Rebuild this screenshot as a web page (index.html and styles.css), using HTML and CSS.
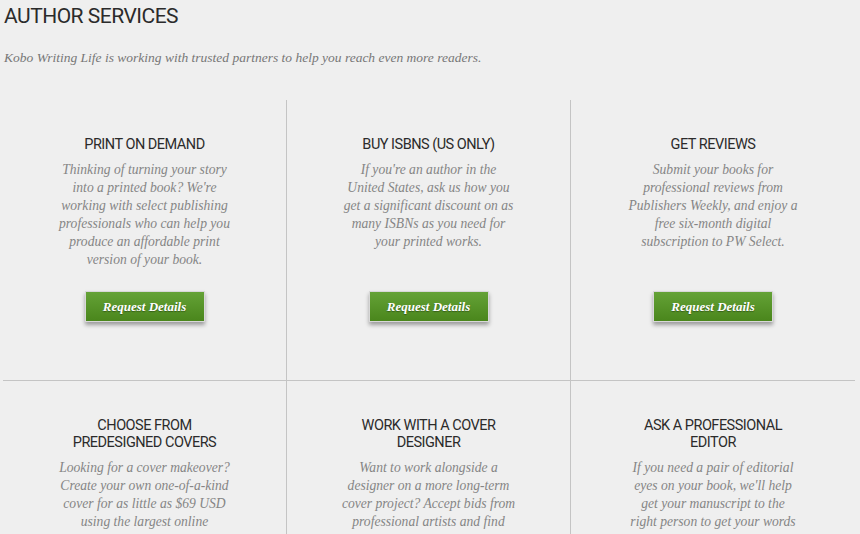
FILE: index.html
```html
<!DOCTYPE html>
<html lang="en">
<head>
    <meta charset="UTF-8">
    <meta name="viewport" content="width=device-width, initial-scale=1.0">
    <title>Author Services</title>
    <link rel="stylesheet" href="styles.css">
</head>
<body>

    <div class="page">
        <h1>AUTHOR SERVICES</h1>
        <p class="intro">Kobo Writing Life is working with trusted partners to help you reach even more readers.</p>

        <div class="services">
            <div class="service">
                <h2>PRINT ON DEMAND</h2>
                <p>Thinking of turning your story<br>into a printed book? We're<br>working with select publishing<br>professionals who can help you<br>produce an affordable print<br>version of your book.</p>
                <a class="btn" href="#">Request Details</a>
            </div>
            <div class="service">
                <h2>BUY ISBNS (US ONLY)</h2>
                <p>If you're an author in the<br>United States, ask us how you<br>get a significant discount on as<br>many ISBNs as you need for<br>your printed works.</p>
                <a class="btn" href="#">Request Details</a>
            </div>
            <div class="service">
                <h2>GET REVIEWS</h2>
                <p>Submit your books for<br>professional reviews from<br>Publishers Weekly, and enjoy a<br>free six-month digital<br>subscription to PW Select.</p>
                <a class="btn" href="#">Request Details</a>
            </div>
            <div class="service">
                <h2>CHOOSE FROM<br>PREDESIGNED COVERS</h2>
                <p>Looking for a cover makeover?<br>Create your own one-of-a-kind<br>cover for as little as $69 USD<br>using the largest online</p>
            </div>
            <div class="service">
                <h2>WORK WITH A COVER<br>DESIGNER</h2>
                <p>Want to work alongside a<br>designer on a more long-term<br>cover project? Accept bids from<br>professional artists and find</p>
            </div>
            <div class="service">
                <h2>ASK A PROFESSIONAL<br>EDITOR</h2>
                <p>If you need a pair of editorial<br>eyes on your book, we'll help<br>get your manuscript to the<br>right person to get your words</p>
            </div>
        </div>
    </div>

</body>
</html>
```

FILE: styles.css
```css
body {
    background-color: #efefef;
    margin: 0;
    font-family: "Liberation Serif", Georgia, serif;
    overflow: hidden;
}
.page {
    padding: 0 5px 0 3px;
}
h1 {
    font-family: Roboto, "Liberation Sans", sans-serif;
    font-size: 21px;
    font-weight: 400;
    letter-spacing: -0.5px;
    color: #2b2b2b;
    margin: 0;
    padding: 3px 0 0 1px;
    line-height: 26px;
}
.intro {
    font-style: italic;
    font-size: 13.5px;
    color: #777777;
    margin: 21px 0 0 1px;
    line-height: 16px;
}
.services {
    display: grid;
    grid-template-columns: 1fr 1fr 1fr;
    margin-top: 34px;
}
.service {
    display: flex;
    flex-direction: column;
    align-items: center;
    text-align: center;
    padding: 35px 20px 58px;
    min-height: 281px;
    box-sizing: border-box;
    border-right: 1px solid #c4c4c4;
}
.service:nth-child(3n) {
    border-right: none;
}
.service:nth-child(-n+3) {
    border-bottom: 1px solid #c4c4c4;
}
h2 {
    font-family: Roboto, "Liberation Sans", sans-serif;
    font-size: 14.5px;
    font-weight: 400;
    letter-spacing: -0.5px;
    color: #2b2b2b;
    margin: 0;
    padding-top: 1px;
    line-height: 17px;
}
.service p {
    font-style: italic;
    font-size: 13.6px;
    line-height: 18px;
    color: #858585;
    margin: 8px 0 0;
    white-space: nowrap;
}
.btn {
    display: block;
    width: 118px;
    height: 29px;
    line-height: 29px;
    margin-top: auto;
    background: linear-gradient(#64a236, #4a861c);
    border: 1px solid #d8d8d8;
    box-shadow: 0 3px 4px rgba(0, 0, 0, 0.35);
    color: #ffffff;
    font-style: italic;
    font-weight: bold;
    font-size: 13px;
    text-decoration: none;
    text-shadow: 0 1px 1px rgba(0, 0, 0, 0.35);
}
```
